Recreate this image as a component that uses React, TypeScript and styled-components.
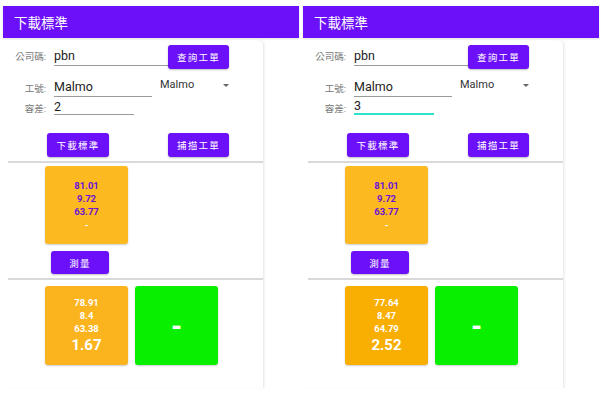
import styled, { createGlobalStyle } from "styled-components";

const GlobalStyle = createGlobalStyle`
  html, body {
    margin: 0;
    padding: 0;
    background: #fff;
    font-family: Roboto, "Noto Sans CJK TC", sans-serif;
  }
`;

const PURPLE = "#6b10f8";

const Page = styled.div`
  display: flex;
  gap: 4px;
  padding: 6px 0 0 3px;
  width: 602px;
  height: 397px;
  box-sizing: border-box;
`;

const Phone = styled.div`
  width: 296px;
  display: flex;
  flex-direction: column;
`;

const Header = styled.div`
  height: 32px;
  background: ${PURPLE};
  color: #fff;
  font-size: 13.5px;
  display: flex;
  align-items: center;
  padding-left: 11px;
  box-shadow: 0 1px 2px rgba(0, 0, 0, 0.12);
  position: relative;
  z-index: 1;
`;

const Card = styled.div`
  width: 260px;
  height: 348px;
  margin-top: 2px;
  border-right: 1px solid #ececec;
  border-top-right-radius: 6px;
  box-shadow: 1px 0 2px rgba(0, 0, 0, 0.05);
  display: flex;
  flex-direction: column;
`;

const FormRow = styled.div<{ $top: number; $height: number }>`
  display: flex;
  align-items: flex-start;
  margin-top: ${({ $top }) => $top}px;
  height: ${({ $height }) => $height}px;
`;

const Label = styled.div<{ $lh: number; $pt?: number }>`
  width: 43px;
  margin-right: 8px;
  text-align: right;
  font-size: 9.5px;
  color: #777;
  line-height: ${({ $lh }) => $lh}px;
  padding-top: ${({ $pt }) => $pt ?? 0}px;
`;

const Field = styled.input<{ $w: number; $h: number; $focus?: boolean }>`
  width: ${({ $w }) => $w}px;
  height: ${({ $h }) => $h}px;
  box-sizing: content-box;
  border: none;
  border-bottom: ${({ $focus }) => ($focus ? "2px solid #2fe3c9" : "1px solid #9a9a9a")};
  padding: 0;
  margin: 0;
  outline: none;
  background: transparent;
  font-family: Roboto, sans-serif;
  font-size: 12.5px;
  color: #222;
`;

const Select = styled.div`
  margin-left: 8px;
  width: 70px;
  display: flex;
  justify-content: space-between;
  align-items: center;
  font-size: 11px;
  color: #333;
  line-height: 18px;
`;

const Arrow = styled.span`
  width: 0;
  height: 0;
  border-left: 3px solid transparent;
  border-right: 3px solid transparent;
  border-top: 3px solid #666;
  margin-right: 1px;
`;

const Button = styled.div<{ $w: number; $h?: number; $ml?: number }>`
  width: ${({ $w }) => $w}px;
  height: ${({ $h }) => $h ?? 24}px;
  margin-left: ${({ $ml }) => $ml ?? 0}px;
  background: ${PURPLE};
  color: #fff;
  border-radius: 3px;
  box-shadow: 0 1px 2px rgba(0, 0, 0, 0.25);
  display: flex;
  align-items: center;
  justify-content: center;
  font-size: 9.5px;
  letter-spacing: 1.2px;
  flex-shrink: 0;
`;

const ButtonRow = styled.div`
  display: flex;
  gap: 59px;
  padding-left: 44px;
  margin-top: 18px;
`;

const Divider = styled.div<{ $top: number }>`
  height: 2px;
  margin: ${({ $top }) => $top}px 0 0 5px;
  background: #d9d9d9;
`;

const TileRow = styled.div<{ $top: number }>`
  display: flex;
  gap: 7px;
  padding-left: 42px;
  margin-top: ${({ $top }) => $top}px;
`;

const Tile = styled.div<{ $bg: string; $h: number }>`
  width: 83px;
  height: ${({ $h }) => $h}px;
  background: ${({ $bg }) => $bg};
  border-radius: 3px;
  box-shadow: 0 1px 2px rgba(0, 0, 0, 0.2);
  display: flex;
  flex-direction: column;
  align-items: center;
  justify-content: center;
`;

const Value = styled.div<{ $color: string; $size?: number; $lh?: number }>`
  color: ${({ $color }) => $color};
  font-size: ${({ $size }) => $size ?? 9.5}px;
  line-height: ${({ $lh }) => $lh ?? 13}px;
  font-weight: 700;
`;

const Dash = styled.div`
  color: #fff;
  font-size: 26px;
  font-weight: 900;
  line-height: 26px;
`;

const MeasureRow = styled.div`
  display: flex;
  margin-top: 7px;
`;

type PanelProps = {
  tolerance: string;
  focused?: boolean;
  result: string[];
  score: string;
  resultBg: string;
};

function Panel({ tolerance, focused, result, score, resultBg }: PanelProps) {
  return (
    <Phone>
      <Header>下載標準</Header>
      <Card>
        <FormRow $top={5} $height={24}>
          <Label $lh={24}>公司碼:</Label>
          <Field $w={114} $h={20} readOnly value="pbn" />
          <Button $w={61}>查詢工單</Button>
        </FormRow>
        <FormRow $top={7} $height={21}>
          <Label $lh={21} $pt={2}>工號:</Label>
          <Field $w={98} $h={20} readOnly value="Malmo" />
          <Select>
            Malmo
            <Arrow />
          </Select>
        </FormRow>
        <FormRow $top={1} $height={17}>
          <Label $lh={17} $pt={2}>容差:</Label>
          <Field $w={80} $h={focused ? 15 : 16} $focus={focused} readOnly value={tolerance} />
        </FormRow>
        <ButtonRow>
          <Button $w={62}>下載標準</Button>
          <Button $w={61}>捕描工單</Button>
        </ButtonRow>
        <Divider $top={4} />
        <TileRow $top={3}>
          <Tile $bg="#fdb920" $h={78}>
            <Value $color="#6a12d6">81.01</Value>
            <Value $color="#6a12d6">9.72</Value>
            <Value $color="#6a12d6">63.77</Value>
            <Value $color="#fff">-</Value>
          </Tile>
        </TileRow>
        <MeasureRow>
          <Button $w={58} $h={23} $ml={48}>測量</Button>
        </MeasureRow>
        <Divider $top={4} />
        <TileRow $top={6}>
          <Tile $bg={resultBg} $h={79}>
            {result.map((v) => (
              <Value key={v} $color="#fff">{v}</Value>
            ))}
            <Value $color="#fff" $size={15} $lh={20}>{score}</Value>
          </Tile>
          <Tile $bg="#08f000" $h={79}>
            <Dash>-</Dash>
          </Tile>
        </TileRow>
      </Card>
    </Phone>
  );
}

export default function App() {
  return (
    <>
      <GlobalStyle />
      <Page>
        <Panel tolerance="2" result={["78.91", "8.4", "63.38"]} score="1.67" resultBg="#fbb41e" />
        <Panel tolerance="3" focused result={["77.64", "8.47", "64.79"]} score="2.52" resultBg="#f9ae02" />
      </Page>
    </>
  );
}
